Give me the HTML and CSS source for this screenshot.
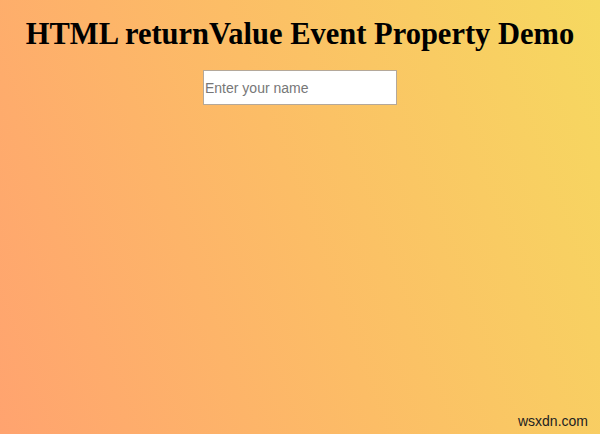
FILE: index.html
```html
<!DOCTYPE html>
<html>
<head>
<meta charset="utf-8">
<link rel="stylesheet" href="styles.css">
</head>
<body>
<div class="page">
  <h1 class="title">HTML returnValue Event Property Demo</h1>
  <input class="name-input" type="text" placeholder="Enter your name">
  <div class="spacer"></div>
  <div class="watermark">wsxdn.com</div>
</div>
</body>
</html>
```
FILE: styles.css
```css
html, body {
  margin: 0;
  padding: 0;
  height: 100%;
}
body {
  background: linear-gradient(70deg, #ffa36f 0%, #fcbd66 50%, #f6d960 100%);
  font-family: "Liberation Serif", "Times New Roman", serif;
}
.page {
  height: 434px;
  display: flex;
  flex-direction: column;
  align-items: center;
  box-sizing: border-box;
  padding-top: 16px;
}
.title {
  margin: 0;
  font-size: 30.5px;
  font-weight: bold;
  color: #000;
  line-height: 36px;
}
.name-input {
  margin-top: 18px;
  width: 194px;
  height: 35px;
  box-sizing: border-box;
  border: 1px solid #b4a89a;
  background: #fff;
  padding: 0 1px;
  font-family: "Liberation Sans", Arial, sans-serif;
  font-size: 14px;
  outline: none;
}
.name-input::placeholder {
  color: #777;
}
.spacer {
  flex: 1;
}
.watermark {
  align-self: flex-end;
  margin: 0 12px 5px 0;
  font-family: "Liberation Sans", Arial, sans-serif;
  font-size: 14px;
  color: #222;
}
```
